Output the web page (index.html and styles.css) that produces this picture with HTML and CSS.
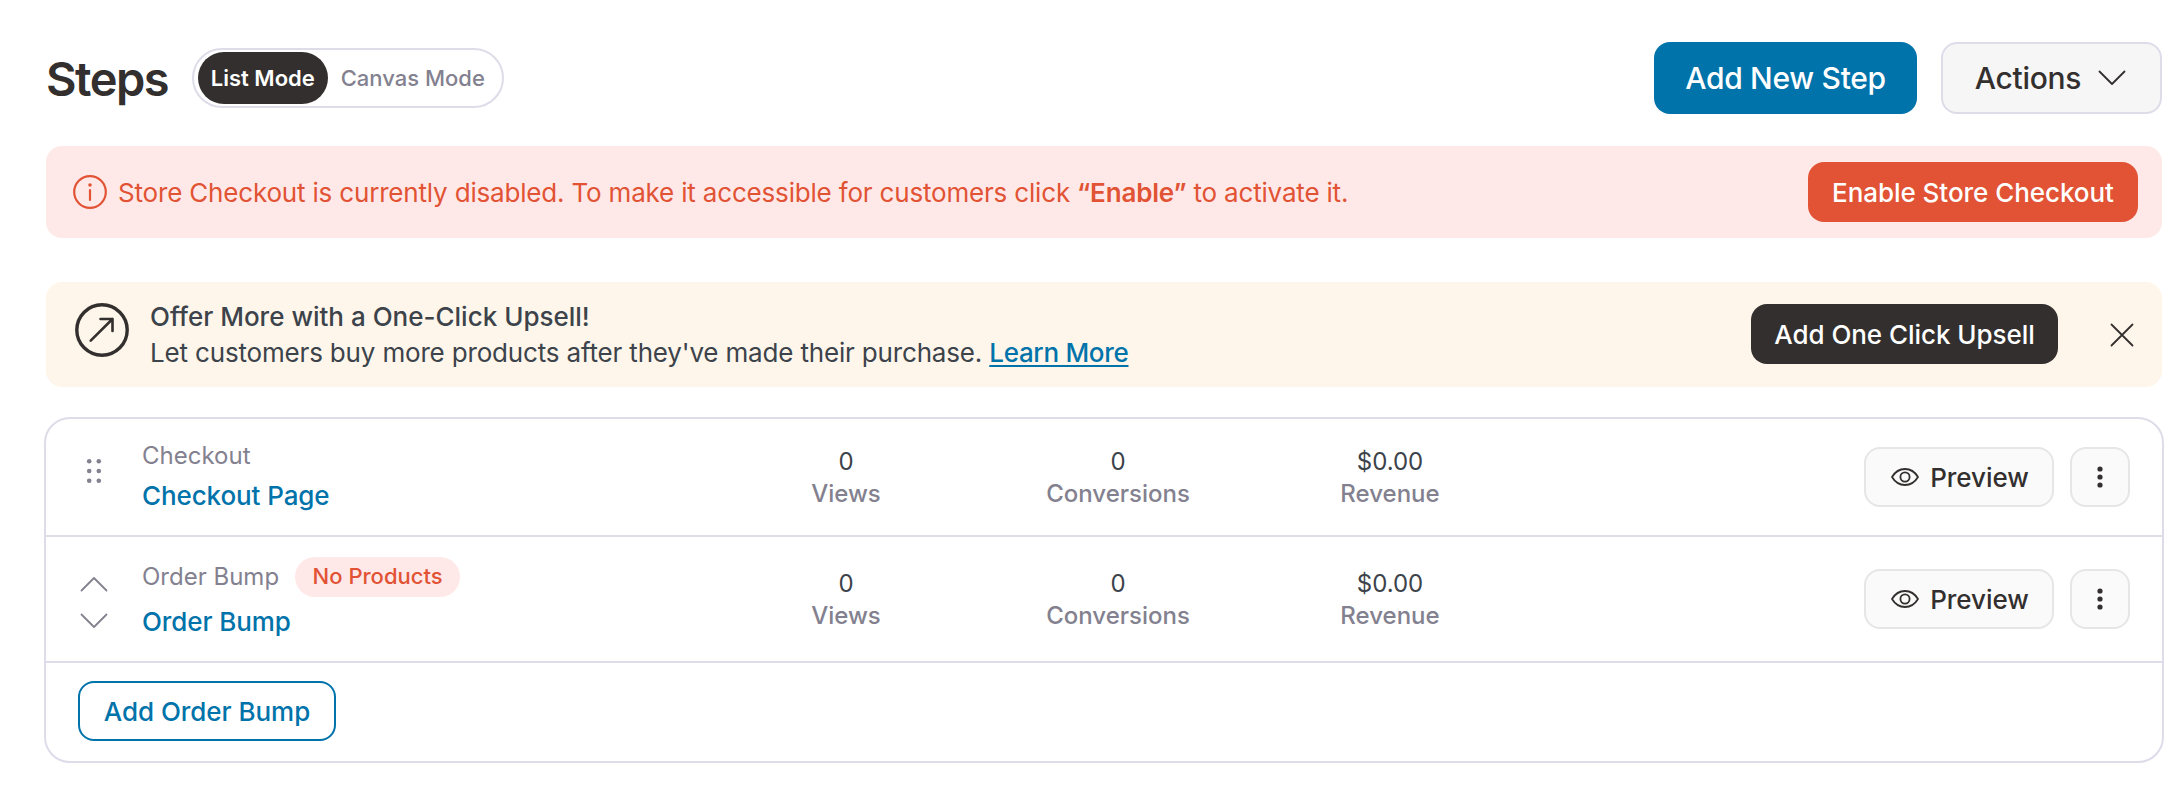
FILE: index.html
```
<!DOCTYPE html>
<html lang="en">
<head>
    <meta charset="UTF-8">
    <meta name="viewport" content="width=device-width, initial-scale=1.0">
    <title>Steps</title>
    <link rel="stylesheet" href="styles.css">
</head>
<body>
    <header class="page-header">
        <h1>Steps</h1>
        <div class="mode-toggle">
            <button class="mode active">List Mode</button>
            <button class="mode">Canvas Mode</button>
        </div>
        <div class="header-actions">
            <button class="btn-large primary">Add New Step</button>
            <button class="btn-large actions">
                Actions
                <svg width="28" height="16" viewBox="0 0 28 16"><path d="M1.5 1.5 14 14 26.5 1.5"/></svg>
            </button>
        </div>
    </header>

    <div class="notice warning">
        <svg class="info-icon" width="34" height="34" viewBox="0 0 34 34">
            <circle cx="17" cy="17" r="15.8"/>
            <path d="M17 15v10"/>
            <circle class="dot" cx="17" cy="10" r="1.8"/>
        </svg>
        <p class="notice-text">Store Checkout is currently disabled. To make it accessible for customers click <b>“Enable”</b> to activate it.</p>
        <button class="btn danger">Enable Store Checkout</button>
    </div>

    <div class="notice upsell">
        <svg class="upsell-icon" width="54" height="54" viewBox="0 0 54 54">
            <circle cx="27" cy="27" r="25.2"/>
            <path d="M15.7 37.7 37.5 16M25.5 16h12v12"/>
        </svg>
        <div class="upsell-text">
            <p class="upsell-title">Offer More with a One-Click Upsell!</p>
            <p>Let customers buy more products after they've made their purchase. <a href="#">Learn More</a></p>
        </div>
        <button class="btn dark">Add One Click Upsell</button>
        <button class="close">
            <svg width="24" height="24" viewBox="0 0 24 24"><path d="M1.5 1.5 22.5 22.5M22.5 1.5 1.5 22.5"/></svg>
        </button>
    </div>

    <div class="steps">
        <div class="step">
            <div class="handle">
                <svg class="grip" width="16" height="26" viewBox="0 0 16 26">
                    <circle cx="3.2" cy="3.2" r="2.3"/><circle cx="12.8" cy="3.2" r="2.3"/>
                    <circle cx="3.2" cy="13" r="2.3"/><circle cx="12.8" cy="13" r="2.3"/>
                    <circle cx="3.2" cy="22.8" r="2.3"/><circle cx="12.8" cy="22.8" r="2.3"/>
                </svg>
            </div>
            <div class="step-info">
                <div class="step-type">Checkout</div>
                <a href="#" class="step-name">Checkout Page</a>
            </div>
            <div class="stat"><span>0</span><span class="stat-label">Views</span></div>
            <div class="stat"><span>0</span><span class="stat-label">Conversions</span></div>
            <div class="stat"><span>$0.00</span><span class="stat-label">Revenue</span></div>
            <div class="step-actions">
                <button class="btn light preview">
                    <svg width="28" height="20" viewBox="0 0 28 20">
                        <path d="M1 10C4 5 8.500 2 14 2s10 3 13 8c-3 5-7.500 8-13 8S4 15 1 10Z"/>
                        <circle cx="14" cy="10" r="4.600"/>
                    </svg>
                    Preview
                </button>
                <button class="btn light more">
                    <svg width="6" height="22" viewBox="0 0 6 22"><circle cx="3" cy="3" r="2.6"/><circle cx="3" cy="11" r="2.6"/><circle cx="3" cy="19" r="2.6"/></svg>
                </button>
            </div>
        </div>

        <div class="step bump">
            <div class="handle">
                <svg width="28" height="16" viewBox="0 0 28 16"><path d="M1.5 14.5 14 2 26.5 14.5"/></svg>
                <svg width="28" height="16" viewBox="0 0 28 16"><path d="M1.5 1.5 14 14 26.5 1.5"/></svg>
            </div>
            <div class="step-info">
                <div class="step-type">Order Bump <span class="badge">No Products</span></div>
                <a href="#" class="step-name">Order Bump</a>
            </div>
            <div class="stat"><span>0</span><span class="stat-label">Views</span></div>
            <div class="stat"><span>0</span><span class="stat-label">Conversions</span></div>
            <div class="stat"><span>$0.00</span><span class="stat-label">Revenue</span></div>
            <div class="step-actions">
                <button class="btn light preview">
                    <svg width="28" height="20" viewBox="0 0 28 20">
                        <path d="M1 10C4 5 8.500 2 14 2s10 3 13 8c-3 5-7.500 8-13 8S4 15 1 10Z"/>
                        <circle cx="14" cy="10" r="4.600"/>
                    </svg>
                    Preview
                </button>
                <button class="btn light more">
                    <svg width="6" height="22" viewBox="0 0 6 22"><circle cx="3" cy="3" r="2.6"/><circle cx="3" cy="11" r="2.6"/><circle cx="3" cy="19" r="2.6"/></svg>
                </button>
            </div>
        </div>

        <div class="steps-footer">
            <button class="btn outline">Add Order Bump</button>
        </div>
    </div>
</body>
</html>
```

FILE: styles.css
```
* {
    box-sizing: border-box;
}
body {
    margin: 0;
    padding: 42px 20px 0 44px;
    background: #fff;
    color: #3c434a;
    font-family: Inter, "Liberation Sans", sans-serif;
    font-size: 26px;
}
h1, p {
    margin: 0;
}
button {
    display: flex;
    align-items: center;
    justify-content: center;
    padding: 0;
    border: none;
    background: none;
    font-family: inherit;
    cursor: pointer;
}
svg {
    flex-shrink: 0;
    fill: none;
    stroke: #332f2e;
    stroke-width: 1.8;
    stroke-linecap: round;
    stroke-linejoin: round;
}

/* Header */
.page-header {
    display: flex;
    align-items: center;
    height: 72px;
    padding: 0 2px;
}
h1 {
    width: 146px;
    padding-top: 2px;
    color: #332f2e;
    font-size: 47px;
    font-weight: 600;
    line-height: 60px;
    letter-spacing: -1.5px;
}
.mode-toggle {
    display: flex;
    width: 312px;
    height: 60px;
    padding: 2px 4px;
    border: 2px solid #dedce9;
    border-radius: 30px;
}
.mode {
    width: 130px;
    height: 52px;
    border-radius: 26px;
    color: #83818f;
    font-size: 22px;
    font-weight: 600;
}
.mode + .mode {
    width: 171px;
    font-weight: 500;
}
.mode.active {
    background: #332f2e;
    color: #fff;
}
.header-actions {
    display: flex;
    gap: 24px;
    margin-left: auto;
}
.btn-large {
    height: 72px;
    border-radius: 16px;
    font-size: 30px;
    font-weight: 500;
    letter-spacing: -0.3px;
}
.btn-large.primary {
    width: 263px;
    background: #0073aa;
    color: #fff;
}
.btn-large.actions {
    gap: 17px;
    width: 221px;
    padding-right: 2px;
    border: 2px solid #dedce9;
    background: #f6f6f6;
    color: #332f2e;
}

/* Notices */
.notice {
    display: flex;
    align-items: center;
    margin: 32px 2px 0;
    border-radius: 16px;
}
.warning {
    height: 92px;
    padding: 0 24px 0 27px;
    background: #ffe9e8;
    color: #e15334;
}
.info-icon {
    stroke: #e15334;
    stroke-width: 2.2;
}
.info-icon .dot {
    fill: #e15334;
    stroke: none;
}
.notice-text {
    margin-left: 11px;
    letter-spacing: -0.18px;
}
.notice-text b {
    font-weight: 600;
}
.btn {
    height: 60px;
    border-radius: 16px;
    font-size: 26px;
    font-weight: 500;
    letter-spacing: -0.05px;
}
.danger {
    width: 330px;
    margin-left: auto;
    background: #e15334;
    color: #fff;
}
.upsell {
    height: 105px;
    margin-top: 44px;
    padding: 0 28px 0 29px;
    background: #fef6ea;
}
.upsell-icon {
    margin-bottom: 9px;
    stroke-width: 2.6;
}
.upsell-icon circle {
    stroke-width: 3.4;
}
.upsell-text {
    margin-left: 21px;
    line-height: 36px;
    letter-spacing: -0.17px;
}
.upsell-title {
    font-weight: 500;
    letter-spacing: 0;
}
.upsell a {
    color: #0073aa;
    font-weight: 500;
    letter-spacing: -0.3px;
    text-decoration-thickness: 2px;
    text-underline-offset: 3px;
}
.dark {
    width: 307px;
    margin: 0 0 1px auto;
    background: #332f2e;
    color: #fff;
}
.close {
    width: 24px;
    margin-left: 52px;
}

/* Steps list */
.steps {
    margin-top: 30px;
    border: 2px solid #dedce9;
    border-radius: 26px;
}
.step {
    display: grid;
    grid-template-columns: 96px 568px 272px 272px 272px 1fr;
    align-items: center;
    height: 118px;
    padding-right: 32px;
    border-bottom: 2px solid #dedce9;
}
.step.bump {
    height: 126px;
}
.handle {
    display: flex;
    flex-direction: column;
    align-items: center;
    gap: 21px;
    width: 96px;
    margin-bottom: 12px;
}
.bump .handle {
    margin: 7px 0 0;
}
.handle svg {
    stroke: #83818f;
}
.handle .grip {
    fill: #83818f;
    stroke: none;
}
.step-info {
    margin-bottom: 3px;
}
.bump .step-info {
    margin-bottom: 0;
}
.step-type {
    display: flex;
    align-items: center;
    gap: 16px;
    color: #83818f;
    font-size: 24px;
    line-height: 40px;
}
.step-name {
    display: block;
    color: #0073aa;
    font-weight: 500;
    line-height: 40px;
    letter-spacing: -0.1px;
    text-decoration: none;
}
.bump .step-name {
    margin-top: 5px;
}
.badge {
    width: 165px;
    height: 40px;
    border-radius: 20px;
    background: #ffe9e8;
    color: #e15334;
    font-size: 22px;
    font-weight: 500;
    line-height: 39px;
    text-align: center;
}
.stat {
    display: flex;
    flex-direction: column;
    align-items: center;
    padding-top: 1px;
    font-size: 24px;
    line-height: 32px;
}
.stat-label {
    color: #83818f;
    font-weight: 500;
}
.step-actions {
    display: flex;
    justify-content: flex-end;
    gap: 16px;
}
.light {
    border: 2px solid #e6e6e6;
    background: #fafafa;
    color: #332f2e;
}
.preview {
    gap: 11px;
    width: 190px;
    padding-left: 2px;
}
.more {
    width: 60px;
}
.more svg {
    fill: #332f2e;
    stroke: none;
}
.steps-footer {
    padding: 18px 32px 20px;
}
.outline {
    width: 258px;
    border: 2px solid #0073aa;
    background: #fff;
    color: #0073aa;
}
```
